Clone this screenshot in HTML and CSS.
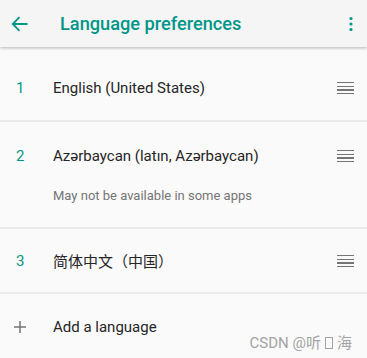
FILE: index.html
```html
<!DOCTYPE html>
<html>
<head>
<meta charset="utf-8">
<link rel="stylesheet" href="styles.css">
</head>
<body>
<div class="screen">
  <header class="appbar">
    <svg class="back" width="24" height="24" viewBox="0 0 24 24"><path d="M19.5 12H5.2M11.5 5.2L4.7 12l6.8 6.8" fill="none" stroke="#009688" stroke-width="1.8"/></svg>
    <h1 class="title">Language preferences</h1>
    <svg class="more" width="6" height="18" viewBox="0 0 6 18"><circle cx="3" cy="3.5" r="1.6" fill="#009688"/><circle cx="3" cy="9" r="1.6" fill="#009688"/><circle cx="3" cy="14.5" r="1.6" fill="#009688"/></svg>
  </header>
  <main class="list">
    <div class="row first">
      <span class="num">1</span>
      <div class="text"><div class="lang">English (United States)</div></div>
      <span class="handle"><i></i><i></i><i></i><i></i></span>
    </div>
    <div class="row">
      <span class="num">2</span>
      <div class="text"><div class="lang">Azərbaycan (latın, Azərbaycan)</div><div class="sub">May not be available in some apps</div></div>
      <span class="handle"><i></i><i></i><i></i><i></i></span>
    </div>
    <div class="row third">
      <span class="num">3</span>
      <div class="text"><div class="lang cjk">简体中文（中国）</div></div>
      <span class="handle"><i></i><i></i><i></i><i></i></span>
    </div>
    <div class="row add">
      <svg class="plus" width="14" height="14" viewBox="0 0 14 14"><path d="M7 1v12M1 7h12" stroke="#757575" stroke-width="1.5" fill="none"/></svg>
      <div class="text"><div class="lang">Add a language</div></div>
    </div>
  </main>
  <div class="watermark">CSDN @听<span class="tofu"></span>海</div>
</div>
</body>
</html>
```
FILE: styles.css
```css
* { box-sizing: border-box; }
html, body { margin: 0; padding: 0; }
body {
  width: 367px;
  height: 358px;
  overflow: hidden;
  background: #fafafa;
  font-family: Roboto, "Noto Sans CJK SC", sans-serif;
}
.screen { position: relative; height: 358px; }
.appbar {
  height: 47px;
  background: #f5f5f5;
  display: flex;
  align-items: center;
  box-shadow: 0 1px 3px rgba(0,0,0,0.28);
  position: relative;
  z-index: 1;
}
.back { margin-left: 8px; flex: none; }
.title {
  margin: 0 0 0 28px;
  font-size: 18.2px;
  font-weight: 500;
  color: #009688;
  flex: 1;
}
.more { margin-right: 13px; flex: none; }
.list { display: flex; flex-direction: column; }
.row {
  display: flex;
  align-items: flex-start;
  padding: 24px 13px 22px 16px;
  border-bottom: 2px solid #ebebeb;
}
.row.first { padding-top: 31px; padding-bottom: 22px; }
.row.third { padding-top: 22px; padding-bottom: 21px; }
.num {
  width: 37px;
  flex: none;
  font-size: 15px;
  line-height: 20px;
  color: #009688;
}
.text { flex: 1; }
.lang {
  font-size: 15px;
  line-height: 20px;
  color: #262626;
}
.lang.cjk { font-family: "Noto Sans CJK SC", sans-serif; }
.sub {
  margin-top: 21px;
  font-size: 13px;
  line-height: 18px;
  color: #757575;
}
.handle {
  width: 17px;
  flex: none;
  display: flex;
  flex-direction: column;
  gap: 2.2px;
  padding-top: 4px;
}
.handle i {
  display: block;
  height: 1.4px;
  background: #757575;
}
.row.add { border-bottom: none; padding-top: 23px; }
.plus { flex: none; margin: 3px 26px 0 -3px; }
.watermark {
  position: absolute;
  right: 15px;
  bottom: 6px;
  font-size: 15px;
  color: #a3a3a3;
  font-family: Roboto, "Noto Sans CJK SC", sans-serif;
}
.tofu {
  display: inline-block;
  width: 8px;
  height: 12px;
  border: 1px solid #a3a3a3;
  margin: 0 4px;
  vertical-align: -1px;
}
```
